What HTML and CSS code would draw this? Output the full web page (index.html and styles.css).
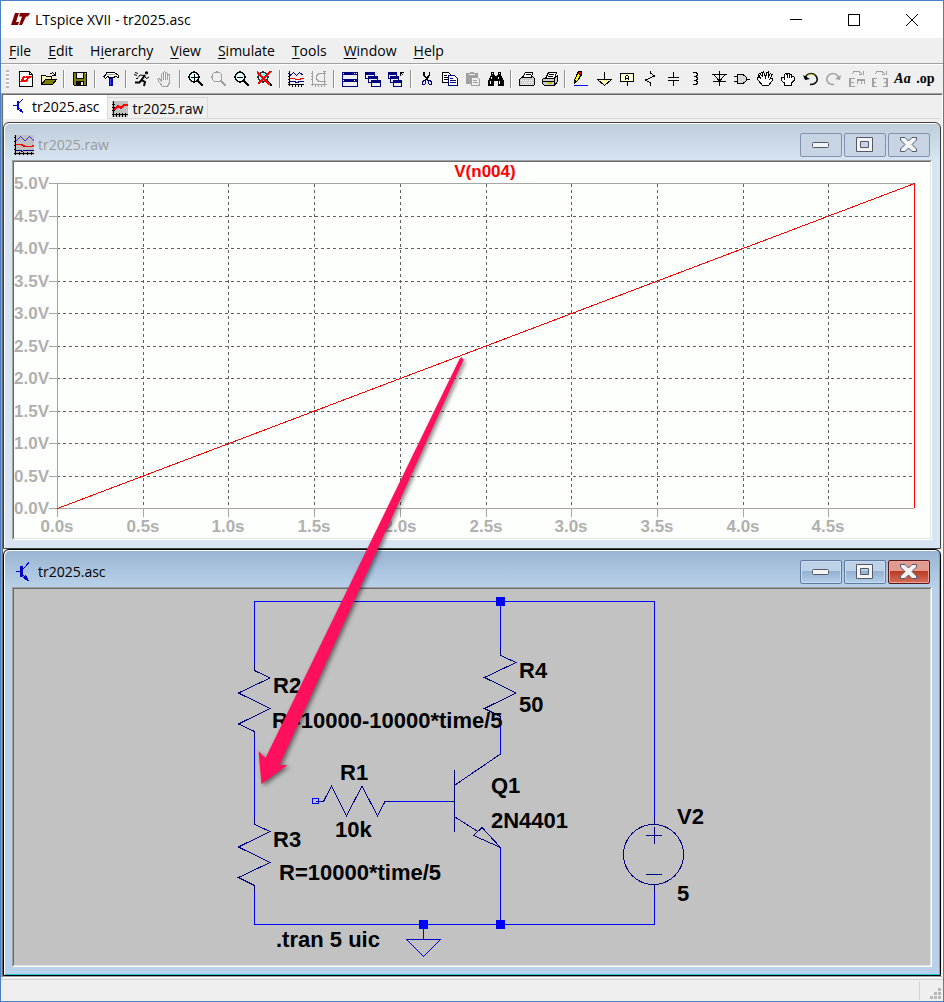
FILE: index.html
```html
<!DOCTYPE html>
<html lang="en">
<head>
<meta charset="utf-8">
<title>LTspice XVII - tr2025.asc</title>
<link rel="stylesheet" href="styles.css">
</head>
<body>
<div class="app">
  <header class="titlebar">
    <svg class="logo" viewBox="0 0 22 16"><path fill="#800000" d="M5 1H9L6 10H9L8 13H1ZM10 1H20L18 4.500H16L12 13H9L12 4.500H9Z"/></svg>
    <h1 class="app-title">LTspice XVII - tr2025.asc</h1>
    <button class="win-btn" aria-label="Minimize"><svg viewBox="0 0 12 12"><path d="M0 5.500H12"/></svg></button>
    <button class="win-btn" aria-label="Maximize"><svg viewBox="0 0 12 12"><path d="M.5.5H11.500V11.500H.5Z"/></svg></button>
    <button class="win-btn" aria-label="Close"><svg class="smooth" viewBox="0 0 12 12"><path d="M0 0L12 12M12 0L0 12"/></svg></button>
  </header>
  <nav class="menubar">
    <button><u>F</u>ile</button><button><u>E</u>dit</button><button>H<u>i</u>erarchy</button><button><u>V</u>iew</button><button><u>S</u>imulate</button><button><u>T</u>ools</button><button><u>W</u>indow</button><button><u>H</u>elp</button>
  </nav>
  <div class="toolbar" role="toolbar" aria-label="Main">
    <span class="grip"></span>
    <button aria-label="New schematic"><svg viewBox="0 0 16 16"><path fill="#fff" stroke="#000" d="M1.500.5H11.500L14.500 3.500V15.500H1.500Z"/><path fill="none" stroke="#000" d="M11.500.5V3.500H14.500"/><path fill="red" d="M5 5H7L6 9H8L7 11H2ZM8 5H14L13 7H11L9 11H7L9 7H7Z"/></svg></button>
    <button aria-label="Open"><svg viewBox="0 0 16 16"><path fill="#ffffb0" stroke="#000" d="M.5 13.500V4.500H4.500L5.500 5.500H10.500V8.500"/><path fill="#808000" stroke="#000" d="M.5 13.500L4.500 8.500H15.500L11.500 13.500Z"/><path fill="none" stroke="#000" d="M9 2.500H10L11.500 1.500L14.500 4M14.500 1V4.500H11"/></svg></button>
    <i class="sep"></i>
    <button aria-label="Save"><svg viewBox="0 0 16 16"><path fill="#808000" stroke="#000" d="M1.500 1.500H14.500V14.500H2.500L1.500 13.500Z"/><path fill="#efefef" stroke="#000" d="M4.500 1.500H11.500V7.500H4.500Z"/><path d="M4 10H12V15H4Z"/><path fill="#efefef" d="M9 11H11V14H9ZM13 2H14V3H13Z"/></svg></button>
    <i class="sep"></i>
    <button aria-label="Control panel"><svg viewBox="0 0 16 16"><path fill="#fff" stroke="#000" d="M3.500 1.500H11.500L15.500 4.500V6.500L12.500 5.500L10.500 6.500H6.500L4.500 5.500L2.500 7.500L.5 5.500L2.500 4.500Z"/><path fill="#aaa" d="M3 3H12V4H3Z"/><path fill="#00a" d="M6 7H10V15H6Z"/><path fill="#44f" d="M7 8H8V14H7Z"/></svg></button>
    <i class="sep"></i>
    <button aria-label="Run"><svg class="smooth" viewBox="0 0 16 16"><circle cx="12.500" cy="1.800" r="1.600"/><path fill="none" stroke="#000" stroke-width="2" d="M11 4L7.500 9L11 11L10 15M8 8.500L5.500 11.500H1"/><path fill="none" stroke="#000" d="M10.500 4.500L6 4L4 6.500M10.500 5L12.500 7.500L15 6M0 3.500L3 4.500M1 1.500L4 2.500M2 7.500H4"/></svg></button>
    <button aria-label="Halt" disabled><svg viewBox="0 0 16 16"><path fill="none" stroke="#a0a0a0" d="M5.500 15.500L2.500 11.500L.5 8.500L2 7.500L4.500 10V3.500L5.500 2.500L6.500 3.500V8.500V1.500L7.500.5L8.500 1.500V8.500V2.500L9.500 1.500L10.500 3V8.500V4.500L12 3.500L12.500 5V11.500L10.500 15.500Z"/></svg></button>
    <i class="sep"></i>
    <button aria-label="Zoom in"><svg viewBox="0 0 16 16"><circle cx="6" cy="6" r="5" fill="#dff" stroke="#000" stroke-width="1.300"/><path stroke="#000" d="M3 6.500H10M6.500 3V10"/><path stroke="#000" stroke-width="2.500" d="M10 10L15 15"/></svg></button>
    <button aria-label="Pan" disabled><svg viewBox="0 0 16 16"><circle cx="6" cy="6" r="5" fill="none" stroke="#a0a0a0" stroke-width="1.200"/><path stroke="#a0a0a0" stroke-width="2.500" d="M10 10L15 15"/></svg></button>
    <button aria-label="Zoom out"><svg viewBox="0 0 16 16"><circle cx="6" cy="6" r="5" fill="#dff" stroke="#000" stroke-width="1.300"/><path stroke="#000" d="M3 6.500H9"/><path stroke="#000" stroke-width="2.500" d="M10 10L15 15"/></svg></button>
    <button aria-label="Zoom to fit"><svg viewBox="0 0 16 16"><circle cx="6" cy="6" r="5" fill="#8ff" stroke="#333" stroke-width="1.300"/><path stroke="#000" stroke-width="2.500" d="M10 10L15 15"/><path stroke="red" stroke-width="1.800" d="M0 1L13 14M14 0L1 13"/></svg></button>
    <i class="sep"></i>
    <button aria-label="Autorange"><svg viewBox="0 0 16 16"><path fill="none" stroke="#000" d="M1.500 0V15M0 2.500H2M0 5.500H2M0 8.500H2M0 11.500H2M0 13.500H16M4.500 13V16M7.500 13V16M10.500 13V16M13.500 13V16"/><path fill="none" stroke="#000080" d="M2 4.500L5.500 1.500L8.500 4.500L11.500 1.500L15.500 4.500M2 10.500H7L8 11.500H10L11 10.500H16"/><path fill="none" stroke="red" d="M2 7.500H6L8 8.500H12L13 7.500H16"/></svg></button>
    <button aria-label="Plot settings" disabled><svg viewBox="0 0 16 16"><path fill="none" stroke="#a0a0a0" d="M1.500 0V15M0 2.500H2M0 5.500H2M0 8.500H2M0 13.500H16M4.500 13V16M7.500 13V16M10.500 13V16M13.500 13V16M12 2.500H8L5.500 5V8L8 10.500H12M10 2.500H15M10 10.500H15M13.500 0V13M15 .5H12"/></svg></button>
    <i class="sep"></i>
    <button aria-label="Tile windows"><svg viewBox="0 0 16 16"><path fill="#efefef" stroke="#000080" d="M.5 1.500H15.500V15.500H.5Z"/><path fill="#000080" d="M0 1H16V4H0ZM0 8H16V11H0Z"/><path fill="#fff" d="M1 2H2V3H1ZM12 2H13V3H12ZM14 2H15V3H14ZM1 9H2V10H1ZM12 9H13V10H12Z"/></svg></button>
    <button aria-label="Cascade windows"><svg viewBox="0 0 16 16"><g fill="#efefef" stroke="#000080"><path d="M.5 1.500H9.500V7.500H.5Z"/><path fill="#000080" d="M.5 1.500H9.500V3.500H.5Z"/><path d="M3.500 5.500H12.500V11.500H3.500Z"/><path fill="#000080" d="M3.500 5.500H12.500V7.500H3.500Z"/><path d="M6.500 9.500H15.500V15.500H6.500Z"/><path fill="#000080" d="M6.500 9.500H15.500V11.500H6.500Z"/></g></svg></button>
    <button aria-label="Close windows"><svg viewBox="0 0 16 16"><g fill="#efefef" stroke="#000080"><path d="M.5 1.500H8.500V7.500H.5Z"/><path fill="#000080" d="M.5 1.500H8.500V3.500H.5Z"/><path d="M2.500 5.500H10.500V11.500H2.500Z"/><path fill="#000080" d="M2.500 5.500H10.500V7.500H2.500Z"/><path d="M5.500 9.500H13.500V15.500H5.500Z"/><path fill="#000080" d="M5.500 9.500H13.500V11.500H5.500Z"/></g><path fill="none" stroke="#000" d="M12.500 5V1.500H16M12.500 1.500L15.500 4.500"/></svg></button>
    <i class="sep"></i>
    <button aria-label="Cut"><svg viewBox="0 0 16 16"><path fill="none" stroke="#000" stroke-width="1.500" d="M5 1V4L9.500 10M10.500 1V4L6 10"/><path fill="none" stroke="#000080" d="M6.500 9.500L5 9.500L3.500 11V13L5 14L6.500 12.500ZM9.500 9.500L11 9.500L12.500 11V13L11 13.500L9.500 12.500Z"/></svg></button>
    <button aria-label="Copy"><svg viewBox="0 0 16 16"><path fill="#fff" stroke="#000" d="M.5 1.500H6.500L8.500 3.500V11.500H.5Z"/><path stroke="#000" d="M2 4.500H5M2 6.500H7M2 8.500H7"/><path fill="#fff" stroke="#000080" d="M6.500 4.500H12.500L15.500 7.500V14.500H6.500Z"/><path stroke="#000080" d="M8 7.500H11M8 9.500H14M8 11.500H14"/></svg></button>
    <button aria-label="Paste" disabled><svg viewBox="0 0 16 16"><path fill="#a0a0a0" d="M1 2H5V1H9V2H13V7H6V13H1Z"/><path fill="#efefef" d="M4 3H10V4H4Z"/><path fill="#efefef" stroke="#a0a0a0" d="M6.500 6.500H12.500L14.500 8.500V14.500H6.500Z"/><path stroke="#a0a0a0" d="M8 9.500H12M8 11.500H13"/></svg></button>
    <button aria-label="Find"><svg viewBox="0 0 16 16"><path d="M3 1H6V4H7V5H9V4H10V1H13V4L16 10V15H10V10H6V15H0V10L3 4Z"/><path fill="#fff" d="M4 2H5V3H4ZM11 2H12V3H11ZM3 6H4V8H3ZM10 6H11V8H10ZM2 10H3V13H2ZM11 10H12V13H11Z"/></svg></button>
    <i class="sep"></i>
    <button aria-label="Print setup"><svg viewBox="0 0 16 16"><path fill="#ccc" stroke="#000" d="M.5 8.500L3.500 5.500H13.500L15.500 7.500V13.500L14.500 14.500H.5Z"/><path fill="#fff" stroke="#000" d="M3.500 6.500L6.500 1.500H13.500L12.500 6.500Z"/><path stroke="#000" d="M7 3.500H12"/><path stroke="#fff" stroke-dasharray="1 1" d="M2 9.500H14M3 11.500H14M2 13.500H14"/></svg></button>
    <button aria-label="Print"><svg viewBox="0 0 16 16"><path fill="#ccc" stroke="#000" d="M.5 8.500L3.500 6.500H13.500L15.500 4.500V10.500L12.500 14.500H2.500L.5 12.500Z"/><path fill="#fff" stroke="#000" d="M3.500 7.500L6.500 1.500H14.500L12.500 7.500Z"/><path stroke="#000" d="M7 3.500H12M6 5.500H11M1 10.500H13M12.500 8V14"/><path stroke="#c0c000" stroke-width="2" d="M6 12H10"/></svg></button>
    <i class="sep"></i>
    <button aria-label="Wire"><svg viewBox="0 0 16 16"><path fill="#000" d="M5 0H9V4L5 10L1 13V9Z"/><path fill="#ff0" d="M5 3L7 4L4 10L2 9Z"/><path fill="red" d="M6 1H8V3H5Z"/><path stroke="#00f" d="M1 14.500H15"/></svg></button>
    <button aria-label="Ground"><svg viewBox="0 0 16 16"><path fill="none" stroke="#000" d="M8.500 1V8M1 8.500H16M2 9L8.500 14.500L15 9"/><path fill="#ffffa0" d="M4 9H13L8 13Z"/></svg></button>
    <button aria-label="Label net"><svg viewBox="0 0 16 16"><path fill="#ffffd0" stroke="#000" d="M1.500 2.500H14.500V10.500H1.500Z"/><path fill="none" stroke="#000" d="M8.500 11V15M6.500 9V5.500L7.500 4.500H8.500L9.500 5.500V9M7 7.500H9"/></svg></button>
    <button aria-label="Resistor"><svg viewBox="0 0 16 16"><path fill="none" stroke="#000" d="M8.500 0V2L12.500 5L3.500 9L8.500 12V15"/></svg></button>
    <button aria-label="Capacitor"><svg viewBox="0 0 16 16"><path fill="none" stroke="#000" d="M8.500 1V6M8.500 10V15"/><path d="M3 6H14V7H3ZM3 9H14V10H3Z"/></svg></button>
    <button aria-label="Inductor"><svg viewBox="0 0 16 16"><path fill="none" stroke="#000" d="M5 1.500H8L9.500 3V4L8 5.500H6H8L9.500 7V8L8 9.500H6H8L9.500 11V12L8 13.500H5"/></svg></button>
    <button aria-label="Diode"><svg viewBox="0 0 16 16"><path fill="none" stroke="#000" d="M8.500 0V15M1 3.500H16M3 4L8.500 10L14 4M2 10.500H15"/></svg></button>
    <button aria-label="Component"><svg viewBox="0 0 16 16"><path fill="#d8d8d8" stroke="#000" d="M3.500 3.500H9L12.500 6.500V9.500L9 12.500H3.500Z"/><path stroke="#000" d="M0 5.500H3M0 10.500H3M13 8.500H16"/></svg></button>
    <button aria-label="Move"><svg viewBox="0 0 16 16"><path fill="#fff" stroke="#000" d="M5.500 14.500L1.500 9.500L0 7L1.500 6L4 8L1.500 3.500L3 2.500L6 6L5 1.500L6.500.5L8.500 6L10 1.500L11.500 1L11.500 6L13.500 2.500L15 3.500L13 8L15.500 7.500V9L11.500 14.500Z"/></svg></button>
    <button aria-label="Drag"><svg viewBox="0 0 16 16"><path fill="#fff" stroke="#000" d="M4.500 14.500V12L1.500 9.500V6.500H3.500L4.500 8V3.500L6 2.500L7.500 4V2.500H9.500V4L11.500 3.500L12 5.500L14 6V9.500L11.500 12V14.500Z"/><path stroke="#000" d="M7.500 4V7M9.500 4V7M11.500 5V7"/></svg></button>
    <button aria-label="Undo"><svg class="smooth" viewBox="0 0 16 16"><path fill="none" stroke="#000" stroke-width="1.500" d="M2 7C4 2 10 1 13 5S13 14 7 13.500"/><path d="M0 4L2 9L7 8Z"/><path fill="none" stroke="#c0c000" d="M4 5C7 2 10 3 12 5"/></svg></button>
    <button aria-label="Redo" disabled><svg class="smooth" viewBox="0 0 16 16"><path fill="none" stroke="#a0a0a0" stroke-width="1.500" d="M13 7C11 2 5 1 2 5S2 14 8 13.500"/><path fill="#a0a0a0" d="M15 4L14 9L9 8Z"/></svg></button>
    <button aria-label="Rotate" disabled><svg viewBox="0 0 16 16"><path fill="none" stroke="#a0a0a0" d="M3 3L5 .5H10L13.500 3.500M14 0V4M13 3.500H10M1 7V16M1 7.500H6M1 11.500H5M1 15.500H6M8 9.500H16M8.500 9V13M12 9V13M15.500 9V13"/><path fill="#a0a0a0" d="M0 7H2V16H0ZM8 8H16V10H8Z"/></svg></button>
    <button aria-label="Mirror" disabled><svg viewBox="0 0 16 16"><path fill="none" stroke="#a0a0a0" d="M3 3L5 .5H10L13.500 3.500M14 0V4M13 3.500H10M0 7.500H5M0 11.500H4M0 15.500H5M11 7.500H16M12 11.500H16M11 15.500H16"/><path fill="#a0a0a0" d="M0 7H2V16H0ZM14 7H16V16H14Z"/></svg></button>
    <button class="glyph italic" aria-label="Text">Aa</button>
    <button class="glyph" aria-label="SPICE directive">.op</button>
  </div>

  <main class="client">
    <div class="tabs" role="tablist">
      <button class="tab active" role="tab" aria-selected="true"><svg viewBox="0 0 16 16"><path fill="none" stroke="#00c" d="M2 6.500H6M7 5L12 0M7 8L12 13"/><path fill="#00c" d="M6 2H8V11H6ZM8 11L10 9L12 14L9 13Z"/></svg>tr2025.asc</button>
      <button class="tab" role="tab" aria-selected="false"><svg viewBox="0 0 16 16"><path fill="#c0c0c0" d="M0 0H16V16H0Z"/><path fill="none" stroke="#000" d="M1.500 0V16M0 3.500H3M0 6.500H3M0 9.500H3M0 13.500H16M4.500 12V16M7.500 12V16M10.500 12V16M13.500 12V16"/><path fill="none" stroke="red" stroke-width="2" d="M2 9L6 5L9 7L12 4H16"/></svg>tr2025.raw</button>
      <span class="tab-rest"></span>
    </div>
    <div class="mdi">
      <section class="child">
        <header class="child-title">
          <svg class="child-icon" viewBox="0 0 20 20"><path fill="#c0c0c0" d="M0 0H20V20H0Z"/><path fill="none" stroke="#000" d="M1.500 0V20M0 2.500H2M0 6.500H2M0 10.500H2M0 14.500H2M0 18.500H20M5.500 17V20M9.500 17V20M13.500 17V20M17.500 17V20"/><path fill="none" stroke="#33f" d="M2 6L6.500 1.500L11 6L15.500 1.500L20 6"/><path fill="none" stroke="#000080" d="M2 15.500H7L8 16.500L10 15.500H20"/><path fill="none" stroke="red" stroke-width="1.500" d="M2 9.500H7L11 11.500H17L20 10.500"/></svg>
          <h2>tr2025.raw</h2>
          <button class="cap-btn" aria-label="Minimize plot"><svg viewBox="0 0 20 18"><rect x="1.500" y="6.500" width="16" height="5" rx="1"/></svg></button>
          <button class="cap-btn" aria-label="Maximize plot"><svg viewBox="0 0 20 18"><path fill-rule="evenodd" d="M1.500 1.500H17.500V15.500H1.500ZM5.500 5.500V11.500H13.500V5.500Z"/></svg></button>
          <button class="cap-btn" aria-label="Close plot"><svg viewBox="0 0 20 18"><path d="M1.500 1.500H6L9.500 5L13 1.500H17.500V4L13 8.500L17.500 13V15.500H13L9.500 12L6 15.500H1.500V13L6 8.500L1.500 4Z"/></svg></button>
        </header>
        <div class="frame">
          <svg class="view plot" viewBox="14 162 916 376" role="img" aria-label="Waveform of V(n004)">
            <path class="grid" d="M57 216.500H914M57 248.500H914M57 281.500H914M57 313.500H914M57 346.500H914M57 378.500H914M57 411.500H914M57 443.500H914M57 476.500H914"/>
            <path class="grid" d="M143.500 184V508M228.500 184V508M314.500 184V508M400.500 184V508M486.500 184V508M571.500 184V508M657.500 184V508M743.500 184V508M828.500 184V508"/>
            <path class="axis" d="M49 183.500H914M57.500 183V517M49 508.500H914M49 216.500H57M49 248.500H57M49 281.500H57M49 313.500H57M49 346.500H57M49 378.500H57M49 411.500H57M49 443.500H57M49 476.500H57M143.500 508V517M228.500 508V517M314.500 508V517M400.500 508V517M486.500 508V517M571.500 508V517M657.500 508V517M743.500 508V517M828.500 508V517"/>
            <path class="trace" d="M57.500 508.500L914.500 183.500V508"/>
            <text class="trace-name" x="485" y="177">V(n004)</text>
            <g class="volts">
              <text x="49" y="189">5.0V</text><text x="49" y="222">4.5V</text><text x="49" y="254">4.0V</text><text x="49" y="287">3.5V</text><text x="49" y="319">3.0V</text><text x="49" y="352">2.5V</text><text x="49" y="384">2.0V</text><text x="49" y="417">1.5V</text><text x="49" y="449">1.0V</text><text x="49" y="482">0.5V</text><text x="49" y="514">0.0V</text>
            </g>
            <g class="secs">
              <text x="57" y="532">0.0s</text><text x="143" y="532">0.5s</text><text x="228" y="532">1.0s</text><text x="314" y="532">1.5s</text><text x="400" y="532">2.0s</text><text x="486" y="532">2.5s</text><text x="571" y="532">3.0s</text><text x="657" y="532">3.5s</text><text x="743" y="532">4.0s</text><text x="828" y="532">4.5s</text>
            </g>
          </svg>
        </div>
      </section>
      <section class="child current">
        <header class="child-title">
          <svg class="child-icon" viewBox="0 0 20 20"><path fill="none" stroke="#00c" d="M2 9.500H7M9 7L15 .5M9 13L15 19"/><path fill="#00c" d="M6 4H9V15H6ZM9 15L12 13L15 19L11 18Z"/></svg>
          <h2>tr2025.asc</h2>
          <button class="cap-btn" aria-label="Minimize schematic"><svg viewBox="0 0 20 18"><rect x="1.500" y="6.500" width="16" height="5" rx="1"/></svg></button>
          <button class="cap-btn" aria-label="Maximize schematic"><svg viewBox="0 0 20 18"><path fill-rule="evenodd" d="M1.500 1.500H17.500V15.500H1.500ZM5.500 5.500V11.500H13.500V5.500Z"/></svg></button>
          <button class="cap-btn close" aria-label="Close schematic"><svg viewBox="0 0 20 18"><path d="M1.500 1.500H6L9.500 5L13 1.500H17.500V4L13 8.500L17.500 13V15.500H13L9.500 12L6 15.500H1.500V13L6 8.500L1.500 4Z"/></svg></button>
        </header>
        <div class="frame">
          <svg class="view schematic" viewBox="14 589 916 376" role="img" aria-label="Schematic">
            <path class="wire" d="M254.500 664V601.500H654.500V818M500.500 601V650M254.500 737V818M254.500 891V924.500H654.500V891M500.500 722V754M500.500 848V924M391 801.500H448"/>
            <path class="part" d="M254.500 663V670.500L270 678L238.500 693L270 708.500L238.500 724L254.500 731.500V738"/>
            <path class="part" d="M254.500 817V824.500L270 831.500L238.500 847L270 862.500L238.500 877.500L254.500 885.500V892"/>
            <path class="part" d="M500.500 649V655.500L516 662.500L484.500 677.500L516 693L484.500 708.500L500.500 716.500V723"/>
            <path class="part" d="M316 801.500H323.500L331.500 786L346.500 816L362 786L377.500 816L385 801.500H392M447 801.500H454"/>
            <path class="part" d="M454.500 770V832M500.500 754L455 785M455 817L477 831M482 827.500L500.500 847.500L473.500 835.500Z"/>
            <circle class="part" cx="653.500" cy="854.500" r="30"/>
            <path class="part" d="M654.500 817V825M654.500 884V892M646 835.500H662M654.500 827V844M646 874.500H662"/>
            <path class="wire" d="M312.500 798.500H318.500V803.500H312.500Z"/>
            <path class="part ground" d="M423.500 924V939M406.500 939.500H440.500L423.500 956.500Z"/>
            <path class="node" d="M496 597H505V606H496ZM419 920H428V929H419ZM496 920H505V929H496Z"/>
            <g class="labels">
              <text x="273" y="693">R2</text><text x="272" y="728">R=10000-10000*time/5</text>
              <text x="273" y="847">R3</text><text x="279" y="880">R=10000*time/5</text>
              <text x="340" y="780">R1</text><text x="335" y="837">10k</text>
              <text x="519" y="678">R4</text><text x="519" y="712">50</text>
              <text x="491" y="793">Q1</text><text x="491" y="828">2N4401</text>
              <text x="677" y="824">V2</text><text x="677" y="901">5</text>
              <text x="276" y="947">.tran 5 uic</text>
            </g>
          </svg>
        </div>
      </section>
      <svg class="arrow" viewBox="3 122 938 854" aria-hidden="true"><path d="M459 359L461 357L463 360L279 765L287 765L261 784L258 751L265 758Z"/></svg>
    </div>
  </main>
  <footer class="statusbar"><span class="status-cell"></span>
    <svg class="resize" viewBox="0 0 12 12"><path d="M8 0H11V3H8ZM4 4H7V7H4ZM8 4H11V7H8ZM0 8H3V11H0ZM4 8H7V11H4ZM8 8H11V11H8Z"/></svg>
  </footer>
</div>
</body>
</html>
```
FILE: styles.css
```css
* { box-sizing: border-box; }
body { margin: 0; font: 14px/20px "Open Sans", "Noto Sans", sans-serif; color: #000; }
button { border: 0; padding: 0; margin: 0; background: none; font: inherit; color: inherit; }
svg { display: block; shape-rendering: crispEdges; }
.smooth { shape-rendering: auto; }
h1, h2 { margin: 0; font-size: 14px; font-weight: 400; }

.app { display: flex; flex-direction: column; min-height: 100vh; border: 1px solid #4a7fc4; background: #efefef; }

.titlebar { display: flex; align-items: center; height: 37px; padding: 0 2px 0 9px; background: #fff; }
.logo { width: 22px; height: 16px; margin-right: 3px; shape-rendering: auto; }
.app-title { flex: 1; }
.win-btn { display: grid; place-items: center; width: 58px; height: 36px; }
.win-btn svg { width: 12px; height: 12px; fill: none; stroke: #000; overflow: visible; }

.menubar { display: flex; gap: 1px; height: 26px; border-bottom: 1px solid #a0a0a0; }
.menubar button { padding: 0 8px; }
.menubar u { text-underline-offset: 2px; }

.toolbar { display: flex; align-items: center; height: 29px; border-top: 1px solid #fff; }
.grip { width: 3px; height: 18px; margin: 0 5px; background: repeating-linear-gradient(#b8b8b8 0 2px, #fff 2px 4px); }
.toolbar button { display: grid; place-items: center; flex: none; width: 23px; height: 22px; }
.toolbar svg { width: 16px; height: 16px; }
.sep { flex: none; width: 8px; height: 18px; background: linear-gradient(90deg, transparent 3px, #909090 3px 4px, #fff 4px 5px, transparent 5px); }
.toolbar .glyph { font: bold 14px/16px "Liberation Serif", serif; }
.toolbar .italic { font-style: italic; }

.client { border: 1px solid; border-color: #a0a0a0 #fff #fff #a0a0a0; }
.tabs { display: flex; align-items: flex-start; height: 28px; border-top: 1px solid #696969; border-left: 1px solid #696969; padding: 0 2px 0 1px; }
.tab { display: flex; align-items: center; gap: 5px; line-height: 16px; height: 22px; margin-top: 2px; padding: 2px 4px 0; border: 1px solid #d9d9d9; border-left: 0; }
.tab svg { width: 16px; height: 16px; }
.tab.active { height: 24px; margin-top: 0; padding: 0 7px; background: #fff; border: 0; border-right: 1px solid #d9d9d9; }
.tab-rest { flex: 1; height: 24px; border-bottom: 1px solid #d9d9d9; }

.mdi { position: relative; padding-right: 1px; border-left: 1px solid #696969; border-bottom: 1px solid #a0a0a0; }
.child { padding: 1px 8px 8px; border: 1px solid #404040; border-radius: 6px 6px 0 0; background: linear-gradient(#bfccda, #d7e4f2 38px); box-shadow: inset 1px 1px #fff; color: #999; }
.child.current { background: linear-gradient(#99b4d1, #b9d1ea 38px); border-color: #000; box-shadow: inset 1px 1px #fff, inset -1px -1px #20c8dc; color: #000; }
.child-title { display: flex; align-items: center; height: 36px; padding: 6px 2px 0; }
.child-icon { width: 20px; height: 20px; margin-right: 4px; }
.child-title h2 { flex: 1; }
.cap-btn { display: grid; place-items: center; width: 42px; height: 24px; margin-left: 2px; border: 1px solid #8291ad; border-radius: 2px; background: #c6d4e3; }
.cap-btn svg { width: 20px; height: 18px; fill: #f4f4f4; stroke: #53596b; shape-rendering: auto; }
.current .cap-btn { border-color: #5f7ba3; background: linear-gradient(#bdd1e7 0 46%, #93b0d0 46%, #b4cfea); box-shadow: inset 0 0 0 1px #c8dbed; }
.current .cap-btn.close { border-color: #5a1620; background: linear-gradient(#e29a8e 0 46%, #ba3a23 46%, #d5705a); box-shadow: inset 0 0 0 1px #e6a79b; }
.frame { border: 1px solid; border-color: #a0a0a0 #fff #fff #a0a0a0; }
.view { width: 100%; height: auto; border: 1px solid; border-color: #696969 #e3e3e3 #e3e3e3 #696969; font-family: "Liberation Sans", Arial, sans-serif; font-weight: 700; }
.plot { background: #fdfffc; font-size: 17px; fill: #b0b0b0; }
.plot path { fill: none; }
.grid { stroke: #606060; stroke-dasharray: 3 3; }
.axis { stroke: #a6a6a6; }
.trace { stroke: #f00; }
.trace-name { fill: #f00; text-anchor: middle; }
.volts { text-anchor: end; }
.secs { text-anchor: middle; }
.schematic { background: #c2c2c2; font-size: 22px; }
.wire { fill: none; stroke: #00f; }
.part { fill: none; stroke: #000080; }
.ground { stroke: #0000c8; }
.node { fill: #00f; }
.labels { fill: #000; }
.arrow { position: absolute; top: 0; left: 0; width: 100%; height: 100%; pointer-events: none; fill: #ff0f5c; shape-rendering: auto; filter: drop-shadow(2px 2px 2px rgba(0, 0, 0, 0.5)); }

.statusbar { display: flex; flex: 1; align-items: flex-end; justify-content: flex-end; min-height: 22px; margin-top: 1px; border-top: 1px solid #d4d4d4; }
.status-cell { width: 1px; height: 19px; margin: 0 10px 1px 0; background: #d4d4d4; }
.resize { width: 12px; height: 12px; margin: 0 1px 1px 0; fill: #b8b8b8; }
```
